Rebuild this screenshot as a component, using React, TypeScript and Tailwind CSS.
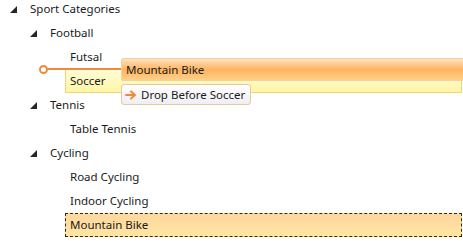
import React from "react";

type Node = {
  label: string;
  level: number;
  expanded?: boolean;
  state?: "drop" | "selected";
};

const nodes: Node[] = [
  { label: "Sport Categories", level: 0, expanded: true },
  { label: "Football", level: 1, expanded: true },
  { label: "Futsal", level: 2 },
  { label: "Soccer", level: 2, state: "drop" },
  { label: "Tennis", level: 1, expanded: true },
  { label: "Table Tennis", level: 2 },
  { label: "Cycling", level: 1, expanded: true },
  { label: "Road Cycling", level: 2 },
  { label: "Indoor Cycling", level: 2 },
  { label: "Mountain Bike", level: 2, state: "selected" },
];

const indent = ["pl-[5px]", "pl-[25px]", "pl-[45px]"];

const Expander = () => (
  <svg width="7" height="7" viewBox="0 0 7 7" className="block">
    <polygon points="7,0 7,7 0,7" fill="#262626" />
  </svg>
);

const Row = ({ node }: { node: Node }) => {
  let box = "border border-transparent";
  if (node.state === "drop")
    box =
      "flex-1 border border-[#f3d37a] bg-gradient-to-b from-[#fffbd6] to-[#fff6a6]";
  if (node.state === "selected")
    box =
      "flex-1 border border-dashed border-[#3a2a00] bg-gradient-to-b from-[#ffd6a0] to-[#ffe6a2]";

  return (
    <div className={`flex h-[24px] items-stretch ${indent[node.level]}`}>
      <div className="flex w-[20px] shrink-0 items-center pl-[5px]">
        {node.expanded && <Expander />}
      </div>
      <div className={`flex items-center px-[4px] ${box}`}>{node.label}</div>
    </div>
  );
};

export default function App() {
  return (
    <div className="relative h-[250px] w-[463px] overflow-hidden bg-white font-['Noto_Sans',sans-serif] text-[11.5px] text-[#1a1a1a]">
      <div className="-mt-[3px] pr-[1px]">
        {nodes.map((n) => (
          <Row key={n.label} node={n} />
        ))}
      </div>

      {/* drop indicator line */}
      <div className="absolute left-[39px] top-[65px] h-[9px] w-[9px] rounded-full border-2 border-[#f08a3a] bg-white" />
      <div className="absolute left-[47px] top-[68px] h-[2px] w-[75px] bg-[#f08a3a]" />

      {/* dragged item */}
      <div className="absolute left-[121px] top-[58px] flex h-[23px] w-[350px] items-center rounded-[2px] border border-[#ead3a4] bg-gradient-to-b from-[#ffe1b8] via-[#ffb45e] to-[#ffcf8a] px-[4px]">
        Mountain Bike
      </div>

      {/* drop tooltip */}
      <div className="absolute left-[121px] top-[84px] flex h-[21px] items-center gap-[4px] rounded-[3px] border border-[#e3caa0] bg-gradient-to-b from-[#ffffff] to-[#eeeef4] pl-[3px] pr-[5px]">
        <svg width="12" height="10" viewBox="0 0 12 10">
          <path d="M1 5H10M6 1.5L10 5L6 8.5" fill="none" stroke="#f08a3a" strokeWidth="2" strokeLinecap="round" strokeLinejoin="round" />
        </svg>
        <span>Drop Before Soccer</span>
      </div>
    </div>
  );
}
